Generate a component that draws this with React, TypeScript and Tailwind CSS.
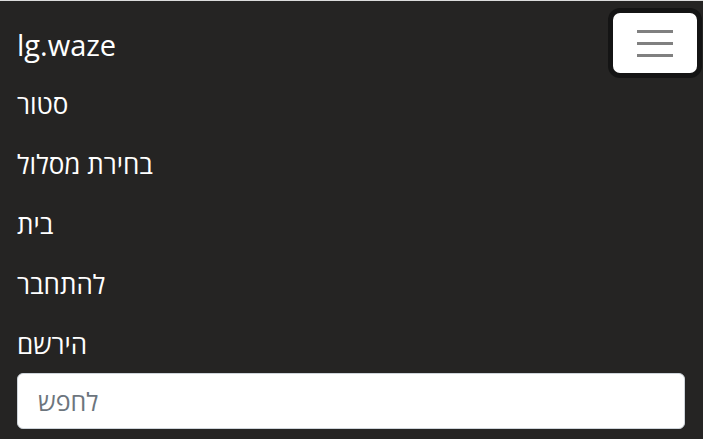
import React from 'react';

const links = ['סטור', 'בחירת מסלול', 'בית', 'להתחבר', 'הירשם'];

export default function App() {
  return (
    <div
      className="h-[439px] w-full overflow-hidden border-t border-[#dcdcdc] bg-[#252423] text-white"
      style={{ fontFamily: '"Open Sans", "Liberation Sans", sans-serif' }}
    >
      <div className="flex h-[73px] items-start justify-between pl-[17px] pr-[6px]">
        <a className="mt-[26px] text-[29px] leading-[36px] text-white">lg.waze</a>
        <button className="mt-[12px] flex h-[60px] w-[84px] flex-col items-center justify-center gap-[9px] rounded-[7px] bg-white shadow-[0_0_0_5px_#141414]">
          <span className="block h-[3px] w-[36px] bg-[#808080]" />
          <span className="block h-[3px] w-[36px] bg-[#808080]" />
          <span className="block h-[3px] w-[36px] bg-[#808080]" />
        </button>
      </div>
      <ul className="pl-[17px]">
        {links.map((link) => (
          <li key={link} className="flex h-[60px] items-center">
            <a dir="rtl" className="text-[26px] leading-[34px] text-white">
              {link}
            </a>
          </li>
        ))}
      </ul>
      <div className="-mt-px pl-[17px] pr-[18px]">
        <input
          dir="rtl"
          placeholder="לחפש"
          className="h-[56px] w-full rounded-[6px] border border-[#ced4da] bg-white pl-[20px] text-[25px] text-[#495057] outline-none placeholder:text-[#6c757d]"
          style={{ textAlign: 'left' }}
        />
      </div>
    </div>
  );
}
